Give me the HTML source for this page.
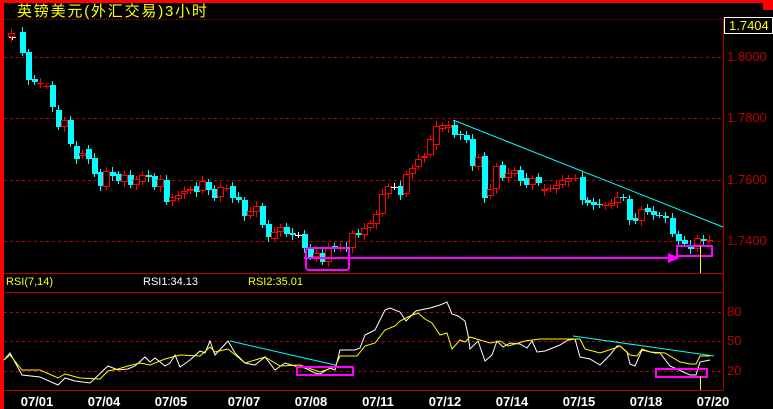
<!DOCTYPE html>
<html><head><meta charset="utf-8"><style>
body{margin:0;background:#000;width:773px;height:409px;overflow:hidden;position:relative;font-family:"Liberation Sans","Noto Sans CJK SC",sans-serif}
.t{position:absolute;white-space:nowrap}
</style></head><body>
<svg id="s" width="773" height="409" style="position:absolute;left:0;top:0" shape-rendering="crispEdges">
<rect x="0" y="0" width="773" height="3" fill="#f00"/>
<rect x="0" y="0" width="4" height="409" fill="#f00"/>
<rect x="763" y="0" width="10" height="10" fill="#f00"/>
<line x1="4" y1="19.5" x2="773" y2="19.5" stroke="#a00" stroke-dasharray="1,1"/>
<g stroke="#b00" stroke-dasharray="3,3">
<line x1="4" y1="57.5" x2="723" y2="57.5"/><line x1="4" y1="118.5" x2="723" y2="118.5"/>
<line x1="4" y1="180.5" x2="723" y2="180.5"/><line x1="4" y1="241.5" x2="723" y2="241.5"/>
<line x1="4" y1="312.5" x2="723" y2="312.5"/><line x1="4" y1="341.5" x2="723" y2="341.5"/>
<line x1="4" y1="371.5" x2="723" y2="371.5"/>
</g>
<g stroke="#b00">
<line x1="4" y1="273.5" x2="723" y2="273.5"/><line x1="4" y1="292.5" x2="723" y2="292.5"/>
<line x1="4" y1="390.5" x2="723" y2="390.5"/><line x1="723.5" y1="19" x2="723.5" y2="390"/>
</g>
<rect x="724.5" y="17.5" width="48" height="16" fill="#000" stroke="#fff"/>
<g id="c"></g>
<g shape-rendering="auto" fill="none">
<line x1="453" y1="120" x2="723" y2="227" stroke="#0ff"/>
<line x1="230" y1="341" x2="335" y2="365" stroke="#0ff"/>
<line x1="573" y1="336" x2="714" y2="356" stroke="#0ff"/>
<polyline id="wl" stroke="#fff"/>
<polyline id="yl" stroke="#ff0"/>
</g>
<g stroke="#f0f" fill="none" stroke-width="2">
<rect x="306" y="248" width="43" height="22" rx="3"/>
<line x1="304" y1="258" x2="675" y2="258"/>
<rect x="677" y="246" width="35" height="10"/>
<rect x="297" y="367" width="56" height="8"/>
<rect x="656" y="369" width="51" height="8"/>
</g>
<polygon points="668,253 680,258 668,263" fill="#f0f"/>
<line x1="700.5" y1="246" x2="700.5" y2="273" stroke="#ff0"/>
<line x1="700.5" y1="376" x2="700.5" y2="390" stroke="#ff0"/>
</svg>
<div class="t" style="left:17px;top:0px;color:#ff0;font-size:15px;letter-spacing:1.8px">英镑美元(外汇交易)3小时</div>
<div class="t" style="left:729px;top:18px;color:#ff0;font-size:13px">1.7404</div>
<div class="t" style="left:727px;top:49px;color:#b00;font-size:13px">1.8000</div>
<div class="t" style="left:727px;top:110px;color:#b00;font-size:13px">1.7800</div>
<div class="t" style="left:727px;top:172px;color:#b00;font-size:13px">1.7600</div>
<div class="t" style="left:727px;top:233px;color:#b00;font-size:13px">1.7400</div>
<div class="t" style="left:727px;top:304px;color:#b00;font-size:13px">80</div>
<div class="t" style="left:727px;top:333px;color:#b00;font-size:13px">50</div>
<div class="t" style="left:727px;top:363px;color:#b00;font-size:13px">20</div>
<div class="t" style="left:6px;top:276px;color:#ff0;font-size:11px">RSI(7,14)</div>
<div class="t" style="left:143px;top:276px;color:#fff;font-size:11px">RSI1:34.13</div>
<div class="t" style="left:248px;top:276px;color:#ff0;font-size:11px">RSI2:35.01</div>
<div id="d"></div>
<script>
var C=[[12,37,37,'w'],[11,33,37,'r'],[22,32,53,'c'],[28,52,80,'c'],[34,79,82,'c'],[40,83,83,'r'],[46,86,86,'r'],[52,85,107,'c'],[58,110,127,'c'],[64,120,127,'r'],[70,120,144,'c'],[76,146,159,'c'],[82,153,156,'r'],[88,149,159,'c'],[94,158,174,'c'],[100,172,186,'c'],[106,171,187,'r'],[112,172,176,'c'],[118,174,181,'c'],[124,175,182,'r'],[130,175,185,'c'],[136,179,185,'r'],[142,175,182,'r'],[148,175,177,'c'],[154,176,187,'c'],[160,179,187,'r'],[166,180,202,'c'],[172,197,201,'r'],[178,195,199,'r'],[184,191,194,'r'],[190,189,191,'r'],[196,186,192,'c'],[202,181,191,'r'],[208,182,190,'c'],[214,189,198,'c'],[220,187,197,'r'],[226,188,188,'r'],[232,186,198,'c'],[238,197,200,'c'],[244,200,216,'c'],[250,211,216,'r'],[256,206,212,'r'],[262,206,225,'c'],[268,224,237,'c'],[274,232,239,'r'],[280,227,232,'r'],[286,227,234,'c'],[292,233,235,'c'],[298,235,235,'w'],[304,234,248,'c'],[310,249,257,'c'],[316,253,257,'r'],[322,253,262,'c'],[328,248,262,'r'],[334,246,249,'c'],[340,247,247,'r'],[346,247,249,'c'],[352,233,248,'r'],[358,233,235,'c'],[364,228,235,'r'],[370,223,228,'r'],[376,214,224,'r'],[382,194,214,'r'],[388,186,194,'r'],[394,187,187,'w'],[400,186,195,'c'],[406,174,194,'r'],[412,168,174,'r'],[418,159,167,'r'],[424,156,158,'r'],[430,139,155,'r'],[436,126,145,'r'],[442,125,129,'r'],[448,125,128,'r'],[454,125,135,'c'],[460,134,135,'c'],[466,135,140,'c'],[472,139,166,'c'],[478,157,167,'r'],[484,156,198,'c'],[490,189,196,'r'],[496,166,189,'r'],[502,165,178,'c'],[508,173,178,'r'],[514,170,174,'r'],[520,170,181,'c'],[526,178,185,'c'],[532,178,185,'r'],[538,177,183,'c'],[544,189,191,'r'],[550,188,189,'r'],[556,185,189,'r'],[562,180,185,'r'],[568,178,182,'r'],[575,178,178,'r'],[582,177,200,'c'],[587,200,203,'c'],[593,202,205,'c'],[599,204,205,'c'],[605,205,205,'r'],[611,203,206,'r'],[617,197,203,'r'],[623,197,198,'c'],[629,199,220,'c'],[635,218,221,'c'],[641,209,221,'r'],[647,208,212,'c'],[653,211,215,'c'],[659,215,215,'c'],[665,216,218,'c'],[672,218,234,'c'],[678,234,241,'c'],[684,240,244,'c'],[690,245,249,'c'],[697,238,249,'r'],[703,239,241,'c'],[709,240,240,'r']];
var h='';
C.forEach(function(k,i){var x=k[0],t=k[1],b=k[2],col=k[3]=='c'?'#0ff':k[3]=='r'?'#f00':'#fff';
var w1=t-3-(i%3),w2=b+3+(i%2)*2;
h+='<line x1="'+(x+.5)+'" y1="'+w1+'" x2="'+(x+.5)+'" y2="'+w2+'" stroke="'+col+'"/>';
if(b-t<=1){h+='<line x1="'+(x-3)+'" y1="'+(t+.5)+'" x2="'+(x+4)+'" y2="'+(t+.5)+'" stroke="'+col+'"/>';}
else if(k[3]=='r'){h+='<rect x="'+(x-2.5)+'" y="'+(t+.5)+'" width="6" height="'+(b-t-1)+'" fill="#000" stroke="'+col+'"/>';}
else{h+='<rect x="'+(x-2)+'" y="'+t+'" width="6" height="'+(b-t)+'" fill="'+col+'"/>';}
});
document.getElementById('c').innerHTML=h;
document.getElementById('wl').setAttribute('points','4,360 10,353 22,375 40,377 58,385 65,378 75,381 90,383 108,366 118,370 128,369 135,366 145,357 150,362 155,358 165,366 170,363 175,355 180,367 190,360 200,351 205,353 210,341 215,355 228,341 235,353 245,363 255,365 265,357 275,370 285,363 295,366 305,368 315,373 320,374 330,368 335,370 340,350 355,350 360,348 365,335 375,330 385,310 390,308 400,312 406,321 416,311 420,310 430,308 440,305 447,302 452,314 458,316 465,321 468,335 470,349 478,341 485,361 492,355 497,341 503,347 510,343 520,344 527,348 532,341 537,352 545,351 560,345 568,340 575,339 580,357 590,359 600,365 610,355 617,346 620,346 627,352 630,364 635,366 642,350 655,353 660,353 670,366 690,375 696,375 700,362 710,360');
document.getElementById('yl').setAttribute('points','4,360 10,355 22,370 40,370 58,378 65,374 80,378 100,379 108,371 118,369 128,366 140,363 150,365 165,359 180,355 200,356 210,347 215,352 228,349 245,363 265,357 280,366 300,365 320,372 335,367 340,356 357,356 365,346 375,343 385,330 395,326 400,321 410,316 418,313 425,319 432,323 440,335 447,333 452,349 460,340 465,342 470,337 480,340 490,343 500,341 508,346 515,344 525,341 540,339 580,339 585,349 600,353 615,348 620,346 630,355 637,356 642,349 650,352 665,353 680,362 690,364 696,364 700,356 710,356');
var D=[['07/01',37],['07/04',104],['07/05',171],['07/07',244],['07/08',311],['07/11',378],['07/12',445],['07/14',512],['07/15',579],['07/18',646],['07/20',713]],dh='';
D.forEach(function(d){dh+='<div class="t" style="left:'+(d[1]-20)+'px;top:394px;color:#fff;font-size:13px;font-weight:bold;width:40px;text-align:center">'+d[0]+'</div>';});
document.getElementById('d').innerHTML=dh;
</script>
</body></html>
